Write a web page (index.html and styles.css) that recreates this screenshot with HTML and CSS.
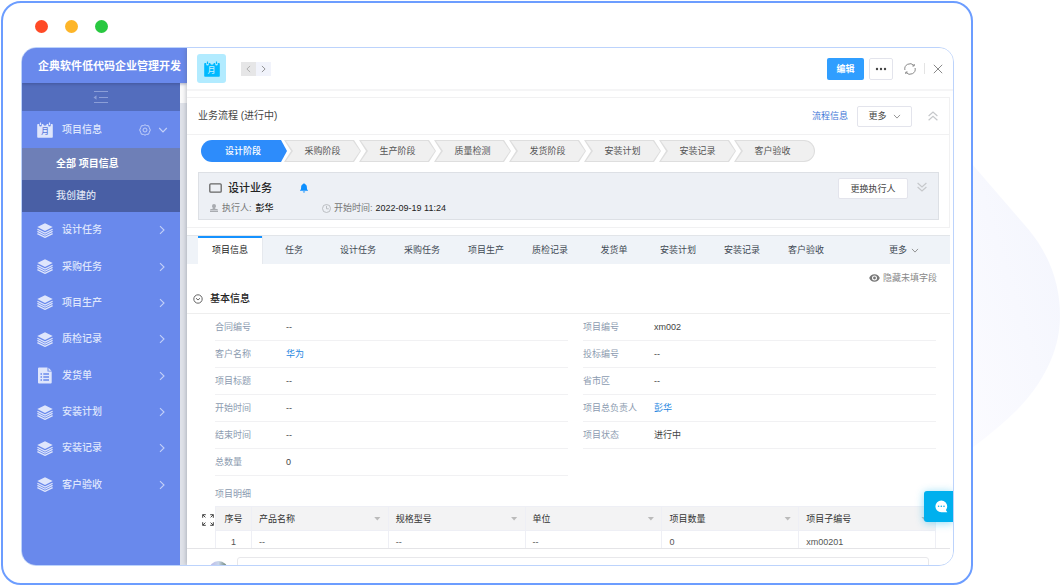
FILE: index.html
```html
<!DOCTYPE html>
<html lang="zh-CN">
<head>
<meta charset="utf-8">
<title>项目信息</title>
<link rel="stylesheet" href="styles.css">
</head>
<body>
<svg class="defs" width="0" height="0" aria-hidden="true">
  <symbol id="layers" viewBox="0 0 16 15">
    <path d="M8 0.2 15.7 4 8 8 0.3 4Z"/>
    <path d="M0.4 6.2 8 10 15.6 6.2M0.4 8.4 8 12.2 15.6 8.4M0.4 10.6 8 14.4 15.6 10.6" fill="none" stroke="currentColor" stroke-width="1.2"/>
  </symbol>
  <symbol id="chev-right" viewBox="0 0 6 10"><path d="M1 1.2 5 5 1 8.8" fill="none" stroke="currentColor" stroke-width="1.1"/></symbol>
  <symbol id="chev-left" viewBox="0 0 6 10"><path d="M5 1.2 1 5 5 8.8" fill="none" stroke="currentColor" stroke-width="1.1"/></symbol>
  <symbol id="chev-down" viewBox="0 0 10 6"><path d="M1.2 1 5 5 8.8 1" fill="none" stroke="currentColor" stroke-width="1.1"/></symbol>
  <symbol id="calendar" viewBox="0 0 16 16">
    <path fill-rule="evenodd" d="M1 2H2.2V3.2A1.3 1.3 0 0 0 4.8 3.2V2H6.2A1.8 1.8 0 0 0 9.8 2H11.2V3.2A1.3 1.3 0 0 0 13.8 3.2V2H15A.8.8 0 0 1 15.8 2.8V15A.8.8 0 0 1 15 15.8H1A.8.8 0 0 1 .2 15V2.8A.8.8 0 0 1 1 2Z"/>
    <path d="M3.5 0.4V3M12.5 0.4V3" stroke="currentColor" stroke-width="1.2"/>
  </symbol>
</svg>
<svg class="backdrop" viewBox="0 0 90 290" aria-hidden="true">
  <defs><linearGradient id="haze" x1="0" y1="1" x2="1" y2="0"><stop offset="0" stop-color="#fbfbff"/><stop offset="1" stop-color="#f3f5fd"/></linearGradient></defs>
  <path fill="url(#haze)" d="M0 0 57 66C79 93 88 122 88 152 88 188 70 220 45 246 32 259 17 271 0 284Z"/>
</svg>
<div class="window">
  <div class="lights"><i class="red"></i><i class="amber"></i><i class="green"></i></div>
  <div class="app">
    <div class="left">
      <div class="brand">企典软件低代码企业管理开发</div>
      <div class="under">
        <nav class="sidebar">
          <button class="collapse" aria-label="收起菜单"><svg width="16" height="14" viewBox="0 0 16 14"><path d="M1 1.5H15M6 7.5H15M1 12.5H15" stroke="currentColor" stroke-width="1"/><path d="M0.5 7.5 3.5 5.3V9.7Z" fill="currentColor"/></svg></button>
          <a class="item head" href="#">
            <span class="cal"><svg width="16" height="16"><use href="#calendar"/></svg><b>月</b></span>
            <span class="name">项目信息</span>
            <svg class="gear" width="12" height="12" viewBox="0 0 12 12" fill="none" stroke="currentColor"><path d="M6 .8 7.6 1.6 9.6 1.8 10.3 3.7 11.3 6 10.3 8.3 9.6 10.2 7.6 10.4 6 11.2 4.4 10.4 2.4 10.2 1.7 8.3.7 6 1.7 3.7 2.4 1.8 4.4 1.6Z"/><circle cx="6" cy="6" r="2"/></svg>
            <svg width="10" height="6"><use href="#chev-down"/></svg>
          </a>
          <a class="sub current" href="#">全部 项目信息</a>
          <a class="sub" href="#">我创建的</a>
          <div class="menu">
            <a class="item" href="#"><svg width="16" height="15"><use href="#layers"/></svg><span class="name">设计任务</span><svg width="6" height="10"><use href="#chev-right"/></svg></a>
            <a class="item" href="#"><svg width="16" height="15"><use href="#layers"/></svg><span class="name">采购任务</span><svg width="6" height="10"><use href="#chev-right"/></svg></a>
            <a class="item" href="#"><svg width="16" height="15"><use href="#layers"/></svg><span class="name">项目生产</span><svg width="6" height="10"><use href="#chev-right"/></svg></a>
            <a class="item" href="#"><svg width="16" height="15"><use href="#layers"/></svg><span class="name">质检记录</span><svg width="6" height="10"><use href="#chev-right"/></svg></a>
            <a class="item" href="#"><svg width="16" height="17" viewBox="0 0 16 17"><path d="M2 .5H10.5V4.5H14.7V15.5A1 1 0 0 1 13.7 16.5H2A1 1 0 0 1 1 15.5V1.5A1 1 0 0 1 2 .5ZM11.5.7 14.5 3.7H11.5Z"/><path class="cut" d="M3.5 7H5M6.3 7H12M3.5 10H5M6.3 10H12M3.5 13H5M6.3 13H12"/></svg><span class="name">发货单</span><svg width="6" height="10"><use href="#chev-right"/></svg></a>
            <a class="item" href="#"><svg width="16" height="15"><use href="#layers"/></svg><span class="name">安装计划</span><svg width="6" height="10"><use href="#chev-right"/></svg></a>
            <a class="item" href="#"><svg width="16" height="15"><use href="#layers"/></svg><span class="name">安装记录</span><svg width="6" height="10"><use href="#chev-right"/></svg></a>
            <a class="item" href="#"><svg width="16" height="15"><use href="#layers"/></svg><span class="name">客户验收</span><svg width="6" height="10"><use href="#chev-right"/></svg></a>
          </div>
        </nav>
        <div class="strip"></div>
      </div>
    </div>

    <main class="drawer">
      <header class="topbar">
        <span class="tile"><span class="cal"><svg width="16" height="16"><use href="#calendar"/></svg><b>月</b></span></span>
        <div class="pager">
          <button class="prev" aria-label="上一条"><svg width="5" height="8"><use href="#chev-left"/></svg></button>
          <button class="next" aria-label="下一条"><svg width="5" height="8"><use href="#chev-right"/></svg></button>
        </div>
        <div class="actions">
          <button class="btn primary">编辑</button>
          <button class="btn dots" aria-label="更多操作"><svg width="12" height="4" viewBox="0 0 12 4" fill="currentColor"><circle cx="2" cy="2" r="1.2"/><circle cx="6" cy="2" r="1.2"/><circle cx="10" cy="2" r="1.2"/></svg></button>
          <button class="plain refresh" aria-label="刷新"><svg width="12" height="12" viewBox="0 0 12 12" fill="none" stroke="currentColor"><path d="M.9 7A5.2 5.2 0 0 1 9.9 2.5M11.1 5A5.2 5.2 0 0 1 2.1 9.5M10.2 1V3H8.4M1.8 11V9H3.6"/></svg></button>
          <span class="bar"></span>
          <button class="plain" aria-label="关闭"><svg width="10" height="10" viewBox="0 0 10 10" stroke="currentColor"><path d="M.8.8 9.2 9.2M9.2.8.8 9.2"/></svg></button>
        </div>
      </header>

      <section class="flow">
        <div class="flow-head">
          <h2>业务流程 (进行中)</h2>
          <a href="#">流程信息</a>
          <button class="btn more">更多 <svg width="8" height="5"><use href="#chev-down"/></svg></button>
          <button class="plain faint" aria-label="收起流程"><svg width="10" height="10" viewBox="0 0 10 10" fill="none" stroke="currentColor" stroke-width="1.2"><path d="M.6 5 5 1 9.4 5M.6 9.2 5 5.2 9.4 9.2"/></svg></button>
        </div>
        <ol class="stages">
          <li class="first">设计阶段</li><li>采购阶段</li><li>生产阶段</li><li>质量检测</li><li>发货阶段</li><li>安装计划</li><li>安装记录</li><li class="last">客户验收</li>
        </ol>
        <div class="task">
          <div class="task-info">
            <div class="task-title">
              <svg width="13" height="10" viewBox="0 0 13 10" fill="none" stroke="#666" stroke-width="1.3"><rect x=".8" y=".8" width="11.4" height="8.4" rx="1"/></svg>
              <h3>设计业务</h3>
              <svg width="8" height="10" viewBox="0 0 8 10" fill="#0c8fff"><path d="M4 .3C4.5.3 4.7.6 4.7 1 6.3 1.4 6.9 2.8 6.9 4.4 6.9 6 7.2 6.7 8 7.3V7.8H0V7.3C.8 6.7 1.1 6 1.1 4.4 1.1 2.8 1.7 1.4 3.3 1 3.3.6 3.5.3 4 .3ZM2.8 8.4H5.2C5.1 9.1 4.6 9.5 4 9.5S2.9 9.1 2.8 8.4Z"/></svg>
            </div>
            <div class="task-meta">
              <span class="who"><svg width="8" height="8" viewBox="0 0 8 8" fill="#a9acb1"><path d="M4 0A2 2 0 0 1 6 2C6 3 5.4 3.6 4.9 4.2 5 4.9 8 4.7 8 6V6.4H0V6C0 4.7 3 4.9 3.1 4.2 2.6 3.6 2 3 2 2A2 2 0 0 1 4 0ZM0 7H8V8H0Z"/></svg>执行人: <b>彭华</b></span>
              <span><svg width="9" height="9" viewBox="0 0 9 9" fill="none" stroke="#b5b8bc" stroke-width=".9"><circle cx="4.5" cy="4.5" r="4"/><path d="M4.5 1.8V4.8H6.8"/></svg>开始时间: <b>2022-09-19 11:24</b></span>
            </div>
          </div>
          <button class="btn assign">更换执行人</button>
          <button class="plain faint" aria-label="展开任务"><svg width="10" height="10" viewBox="0 0 10 10" fill="none" stroke="currentColor" stroke-width="1.2"><path d="M.6 1 5 5 9.4 1M.6 5 5 9 9.4 5"/></svg></button>
        </div>
      </section>

      <nav class="tabs">
        <a class="on" href="#">项目信息</a><a href="#">任务</a><a href="#">设计任务</a><a href="#">采购任务</a><a href="#">项目生产</a><a href="#">质检记录</a><a href="#">发货单</a><a href="#">安装计划</a><a href="#">安装记录</a><a href="#">客户验收</a>
        <button class="plain tab-more">更多 <svg width="8" height="5"><use href="#chev-down"/></svg></button>
      </nav>

      <div class="body">
        <button class="plain hide"><svg width="11" height="8" viewBox="0 0 11 8"><path fill="#777" fill-rule="evenodd" d="M5.5.3C8 .3 10 1.8 10.8 4 10 6.2 8 7.7 5.5 7.7S1 6.2.2 4C1 1.8 3 .3 5.5.3ZM5.5 1.5A2.5 2.5 0 1 0 5.5 6.5 2.5 2.5 0 1 0 5.5 1.5Z"/><circle cx="5.5" cy="4" r="1.4" fill="#777"/></svg>隐藏未填字段</button>
        <h2 class="section"><svg width="10" height="10" viewBox="0 0 10 10" fill="none" stroke="#555" stroke-width=".9"><circle cx="5" cy="5" r="4.2"/><path d="M3 4.2 5 6 7 4.2"/></svg>基本信息</h2>
        <div class="fields">
          <dl>
            <div><dt>合同编号</dt><dd>--</dd></div>
            <div><dt>客户名称</dt><dd><a href="#">华为</a></dd></div>
            <div><dt>项目标题</dt><dd>--</dd></div>
            <div><dt>开始时间</dt><dd>--</dd></div>
            <div><dt>结束时间</dt><dd>--</dd></div>
            <div><dt>总数量</dt><dd>0</dd></div>
          </dl>
          <dl>
            <div><dt>项目编号</dt><dd>xm002</dd></div>
            <div><dt>投标编号</dt><dd>--</dd></div>
            <div><dt>省市区</dt><dd>--</dd></div>
            <div><dt>项目总负责人</dt><dd><a href="#">彭华</a></dd></div>
            <div><dt>项目状态</dt><dd>进行中</dd></div>
          </dl>
        </div>
        <h3 class="detail-title">项目明细</h3>
        <div class="detail">
          <button class="plain expand" aria-label="全屏"><svg width="12" height="12" viewBox="0 0 12 12" fill="none" stroke="#444"><path d="M.7 3.8V.7H3.8M.7.7 3.4 3.4M8.2.7H11.3V3.8M11.3.7 8.6 3.4M.7 8.2V11.3H3.8M.7 11.3 3.4 8.6M8.2 11.3H11.3V8.2M11.3 11.3 8.6 8.6"/></svg></button>
          <table>
            <thead><tr><th class="no">序号</th><th><span>产品名称<i></i></span></th><th><span>规格型号<i></i></span></th><th><span>单位<i></i></span></th><th><span>项目数量<i></i></span></th><th><span>项目子编号<i></i></span></th></tr></thead>
            <tbody><tr><td class="no">1</td><td>--</td><td>--</td><td>--</td><td>0</td><td>xm00201</td></tr></tbody>
          </table>
        </div>
      </div>
      <footer class="comment">
        <span class="avatar"></span>
        <input type="text" aria-label="评论">
      </footer>
    </main>
    <button class="chat" aria-label="在线咨询"><svg width="13" height="13" viewBox="0 0 13 13"><path fill="#fff" d="M6.3.4A5.9 5.9 0 0 1 12.2 6.3C12.2 7.8 11.7 9 10.9 10L12.3 12.2H6.3A5.9 5.9 0 0 1 6.3.4Z"/><g fill="#00b0ee"><circle cx="3.6" cy="6.2" r=".8"/><circle cx="6.3" cy="6.2" r=".8"/><circle cx="9" cy="6.2" r=".8"/></g></svg></button>
  </div>
</div>
</body>
</html>
```

FILE: styles.css
```css
* { box-sizing: border-box; margin: 0; padding: 0; }
body {
  height: 100vh;
  padding: 1px 89px 1px 1px;
  background: #fff;
  color: #444;
  font: 9px/14px "Liberation Sans", "Noto Sans CJK SC", sans-serif;
  overflow: hidden;
}
a { color: inherit; text-decoration: none; }
button { font: inherit; color: inherit; border: 0; background: none; cursor: pointer; }
svg { display: block; flex: none; }
ol { list-style: none; }
h2, h3 { font-weight: 400; }
.defs { position: absolute; }
.backdrop { position: absolute; right: 0; top: 164px; width: 90px; }

.window {
  position: relative;
  display: flex;
  flex-direction: column;
  height: 100%;
  border: 2px solid #6c9dff;
  border-radius: 20px;
  background: #fff;
}
.lights { display: flex; flex: none; gap: 17px; height: 44px; padding: 17px 0 0 32px; }
.lights i { width: 13px; height: 13px; border-radius: 50%; }
.red { background: #ff4a26; }
.amber { background: #fdb528; }
.green { background: #28c840; }

.app {
  position: relative;
  display: flex;
  flex: 1;
  min-height: 0;
  margin: 0 17px 17px 18px;
  border: 1px solid #bcd3fc;
  border-radius: 15px;
  overflow: hidden;
}
.left { display: flex; flex: none; flex-direction: column; width: 165px; background: #e1e4ea; }
.brand {
  position: relative;
  z-index: 1;
  flex: none;
  height: 35px;
  padding-left: 16px;
  background: #6989ec;
  box-shadow: 0 1px 3px rgba(40, 50, 100, .4);
  color: #fff;
  font-size: 11px;
  font-weight: 700;
  line-height: 36px;
  white-space: nowrap;
}
.under { display: flex; flex: 1; min-height: 0; }
.sidebar { flex: none; width: 158px; background: #6989ec; color: #dfe6fc; font-weight: 500; }
.strip { flex: 1; background: linear-gradient(#fafafa 20px, #dfe2e9 20px); }
.collapse { display: flex; width: 100%; height: 28px; align-items: center; justify-content: center; background: #536dbd; color: #8b9ed8; }
.item { display: flex; align-items: center; padding: 0 15px; fill: currentColor; font-size: 10px; }
.head { height: 37px; padding-right: 12px; }
.name { flex: 1; padding-left: 9px; }
.item > svg:last-child { color: #c3d0f8; }
.gear { margin-right: 7px; color: #c3d0f8; }
.sub { display: block; height: 32px; padding-left: 34px; background: #495fa5; color: #dfe3f2; font-size: 10px; line-height: 32px; }
.current { background: #6e7fb7; color: #fff; font-weight: 700; }
.menu { display: grid; grid-auto-rows: 1fr; height: 291px; }
.cut { stroke: #6989ec; stroke-width: 1.3; }
.cal { display: grid; width: 16px; height: 16px; }
.cal > * { grid-area: 1 / 1; }
.cal b { padding-top: 3px; font-size: 8px; line-height: 13px; text-align: center; font-weight: 500; }
.head .cal b { color: #5877da; }

.drawer { position: relative; z-index: 2; display: flex; flex: 1; flex-direction: column; min-width: 0; background: #fff; box-shadow: -1px 0 4px rgba(90, 95, 110, .35); }
.topbar { display: flex; flex: none; align-items: center; height: 43px; padding: 0 10px; border-bottom: 2px solid #f5f5f6; }
.tile { display: grid; place-items: center; width: 29px; height: 29px; border-radius: 3px; background: #b2ebff; color: #00b9ff; fill: currentColor; }
.tile b { color: #c5f0ff; }
.pager { display: flex; margin-left: 15px; }
.pager button { display: grid; place-items: center; width: 15px; height: 14px; }
.pager .prev { background: #e6e6e7; color: #aaa; }
.pager .next { background: #f1f3fb; color: #888; }
.actions { display: flex; align-items: center; margin-left: auto; color: #888; }
.btn { height: 22px; border: 1px solid #e3e4ec; border-radius: 2px; background: #fff; color: #444; }
.primary { width: 37px; border: 0; background: #309eff; color: #fff; font-weight: 700; }
.dots { display: grid; place-items: center; width: 24px; margin-left: 5px; }
.refresh { margin-left: 11px; }
.bar { width: 1px; height: 11px; margin: 0 8px; background: #e4e4e4; }

.flow { flex: none; margin: 6px 3px 0 0; border: 1px solid #f1f1f2; border-left: 0; }
.flow-head { display: flex; align-items: center; height: 37px; padding: 0 11px; border-bottom: 1px solid #f1f1f2; }
.flow-head h2 { flex: 1; font-size: 10px; }
.flow-head a { color: #4076d6; }
.more { display: flex; align-items: center; justify-content: center; gap: 6px; width: 55px; height: 21px; margin: 0 16px 0 9px; }
.more svg, .tab-more svg { color: #888; }
.faint { color: #c6c8cb; }
.stages { display: flex; height: 22px; margin: 5px 0 0 14px; color: #555; line-height: 22px; text-align: center; }
.stages li { position: relative; z-index: 0; width: 77px; margin-left: -2px; background: #dedede; clip-path: polygon(0 0, calc(100% - 7px) 0, 100% 50%, calc(100% - 7px) 100%, 0 100%, 7px 50%); }
.stages li::before { content: ""; position: absolute; z-index: -1; inset: 1px; background: #f0f0f0; clip-path: polygon(1px 0, calc(100% - 7px) 0, 100% 50%, calc(100% - 7px) 100%, 1px 100%, 8px 50%); }
.stages .first { width: 86px; margin-left: 0; margin-right: -1px; padding-right: 2px; border-radius: 11px 0 0 11px; background: #2d8cfb; color: #fff; font-weight: 500; clip-path: polygon(0 0, calc(100% - 6px) 0, 100% 50%, calc(100% - 6px) 100%, 0 100%); }
.stages .first::before { content: none; }
.stages .last { width: 81px; padding-right: 4px; border-radius: 0 11px 11px 0; clip-path: polygon(0 0, 100% 0, 100% 100%, 0 100%, 7px 50%); }
.stages .last::before { border-radius: 0 10px 10px 0; clip-path: polygon(1px 0, 100% 0, 100% 100%, 1px 100%, 8px 50%); }
.task { display: flex; align-items: flex-start; height: 48px; margin: 10px 10px 7px 11px; padding: 5px 11px 5px 10px; border: 1px solid #dde0e5; background: #edf0f5; }
.task-info { flex: 1; }
.task-title { display: flex; align-items: center; height: 20px; }
.task-title h3 { margin: 0 28px 0 6px; color: #222; font-size: 11px; font-weight: 500; }
.task-meta { display: flex; height: 20px; align-items: center; color: #777; }
.task-meta span { display: flex; align-items: center; gap: 3px; }
.task-meta b { color: #222; font-weight: 500; }
.task-meta .who { width: 113px; padding-left: 1px; gap: 4px; }
.assign { width: 70px; height: 21px; margin-right: 9px; }
.task .faint { margin-top: 4px; }

.tabs { display: flex; flex: none; height: 29px; margin: 7px 3px 0 0; padding-left: 11px; border-top: 1px solid #e2e5e9; background: #eff3f8; color: #3f4a54; }
.tabs a { width: 64px; line-height: 28px; text-align: center; }
.tabs .on { border-top: 2px solid #1592ff; background: #fff; color: #222; line-height: 24px; box-shadow: 1px 0 #e6e9ee; }
.tab-more { display: flex; align-items: center; gap: 4px; margin: 0 31px 0 auto; }

.body { flex: 1; min-height: 0; overflow: hidden; }
.hide { display: flex; align-items: center; gap: 3px; height: 28px; margin: 0 16px 0 auto; color: #888; }
.section { display: flex; align-items: center; gap: 7px; height: 22px; margin-right: 3px; padding: 0 0 7px 6px; border-bottom: 1px solid #eee; color: #222; font-size: 10px; font-weight: 500; }
.fields { display: grid; grid-template-columns: 1fr 1fr; gap: 15px; padding: 0 17px 0 28px; }
.fields dl > div { display: flex; height: 27px; border-bottom: 1px solid #f1f1f3; line-height: 26px; }
.fields dt { width: 71px; color: #8c9bb0; }
.fields a { color: #2586df; }
.detail-title { padding: 11px 0 5px 28px; color: #8c9bb0; font-size: 9px; }
.detail { display: flex; align-items: flex-start; gap: 1px; padding: 0 17px 0 15px; }
.expand { padding-top: 8px; }
table { flex: 1; width: 100%; table-layout: fixed; border-collapse: collapse; text-align: left; }
th, td { height: 24px; padding: 0 7px; border: 1px solid #eeeff5; font-weight: 400; }
th { background: #f3f3f4; color: #333; }
td { height: 22px; color: #555; }
.no { width: 36px; padding: 0; text-align: center; }
th span { display: flex; align-items: center; justify-content: space-between; }
th i { width: 7px; height: 4px; background: #bbb; clip-path: polygon(0 0, 100% 0, 50% 100%); }

.comment { display: flex; flex: none; gap: 9px; height: 17px; margin-right: 3px; padding: 8px 21px 0 22px; border-top: 1px solid #e4e4e7; overflow: hidden; }
.avatar { flex: none; width: 19px; height: 19px; margin-top: 4px; border-radius: 50%; background: linear-gradient(90deg, #b9b4ea, #c9d6ea 50%, #5b7560); }
.comment input { flex: 1; height: 28px; border: 1px solid #e8e8eb; border-radius: 3px; background: #fff; }

.chat { position: absolute; z-index: 3; right: 0; bottom: 43px; display: grid; place-items: center; width: 29px; height: 31px; padding-left: 5px; border-radius: 3px 0 0 3px; background: #00b0ee; box-shadow: 0 1px 8px rgba(0, 176, 238, .45); }
```
